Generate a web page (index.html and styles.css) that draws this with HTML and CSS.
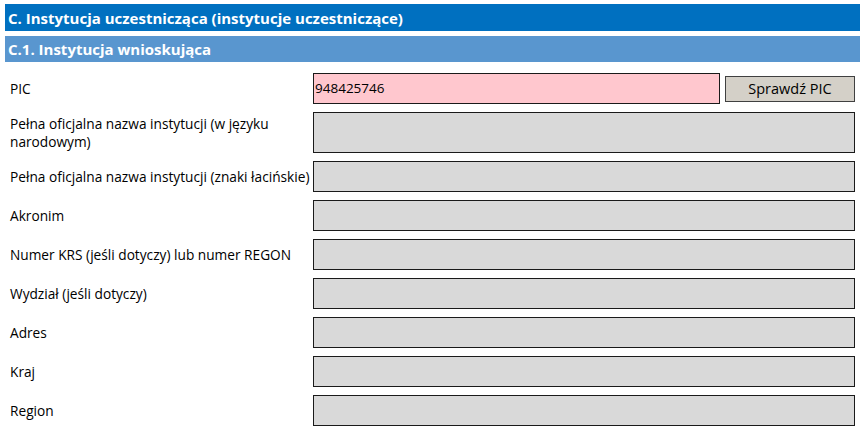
FILE: index.html
```html
<!DOCTYPE html>
<html lang="pl">
<head>
    <meta charset="UTF-8">
    <meta name="viewport" content="width=device-width, initial-scale=1.0">
    <title>Instytucja uczestnicząca</title>
    <link rel="stylesheet" href="styles.css">
</head>
<body>
    <div class="section-title">C. Instytucja uczestnicząca (instytucje uczestniczące)</div>
    <div class="subsection-title">C.1. Instytucja wnioskująca</div>

    <div class="form">
        <div class="row">
            <div class="label">PIC</div>
            <div class="pic-wrap">
                <div class="field field-pic">948425746</div>
                <div class="btn">Sprawdź PIC</div>
            </div>
        </div>
        <div class="row">
            <div class="label">Pełna oficjalna nazwa instytucji (w języku narodowym)</div>
            <div class="field field-tall"></div>
        </div>
        <div class="row">
            <div class="label">Pełna oficjalna nazwa instytucji (znaki łacińskie)</div>
            <div class="field"></div>
        </div>
        <div class="row">
            <div class="label">Akronim</div>
            <div class="field"></div>
        </div>
        <div class="row">
            <div class="label">Numer KRS (jeśli dotyczy) lub numer REGON</div>
            <div class="field"></div>
        </div>
        <div class="row">
            <div class="label">Wydział (jeśli dotyczy)</div>
            <div class="field"></div>
        </div>
        <div class="row">
            <div class="label">Adres</div>
            <div class="field"></div>
        </div>
        <div class="row">
            <div class="label">Kraj</div>
            <div class="field"></div>
        </div>
        <div class="row">
            <div class="label">Region</div>
            <div class="field"></div>
        </div>
    </div>
</body>
</html>
```
FILE: styles.css
```css
body {
    margin: 0;
    padding: 4px 3px 0 5px;
    font-family: "Open Sans", Arial, sans-serif;
    background-color: #ffffff;
    color: #000000;
}

/* Nagłówki sekcji */
.section-title,
.subsection-title {
    color: #ffffff;
    font-weight: bold;
    font-size: 15px;
    padding: 0 3px;
    display: flex;
    align-items: center;
}

.section-title {
    height: 27px;
    background-color: #0070c0;
}

.subsection-title {
    height: 26px;
    margin-top: 5px;
    background-color: #5996cf;
}

/* Formularz */
.form {
    display: flex;
    flex-direction: column;
    gap: 8px;
    padding: 11px 5px 0 5px;
}

.row {
    display: flex;
    align-items: center;
}

.label {
    width: 303px;
    flex-shrink: 0;
    font-size: 13.7px;
    line-height: 18px;
}

.field {
    flex: 1;
    height: 29px;
    border: 1px solid #1a1a1a;
    background-color: #d9d9d9;
}

.field-tall {
    height: 39px;
}

.pic-wrap {
    flex: 1;
    display: flex;
    align-items: center;
    gap: 5px;
}

.field-pic {
    background-color: #ffc7ce;
    font-size: 13.5px;
    line-height: 29px;
    padding-left: 1px;
}

.btn {
    width: 128px;
    height: 24px;
    border: 1px solid #404040;
    background-color: #d4d0c8;
    font-size: 14.5px;
    display: flex;
    align-items: center;
    justify-content: center;
}
```
